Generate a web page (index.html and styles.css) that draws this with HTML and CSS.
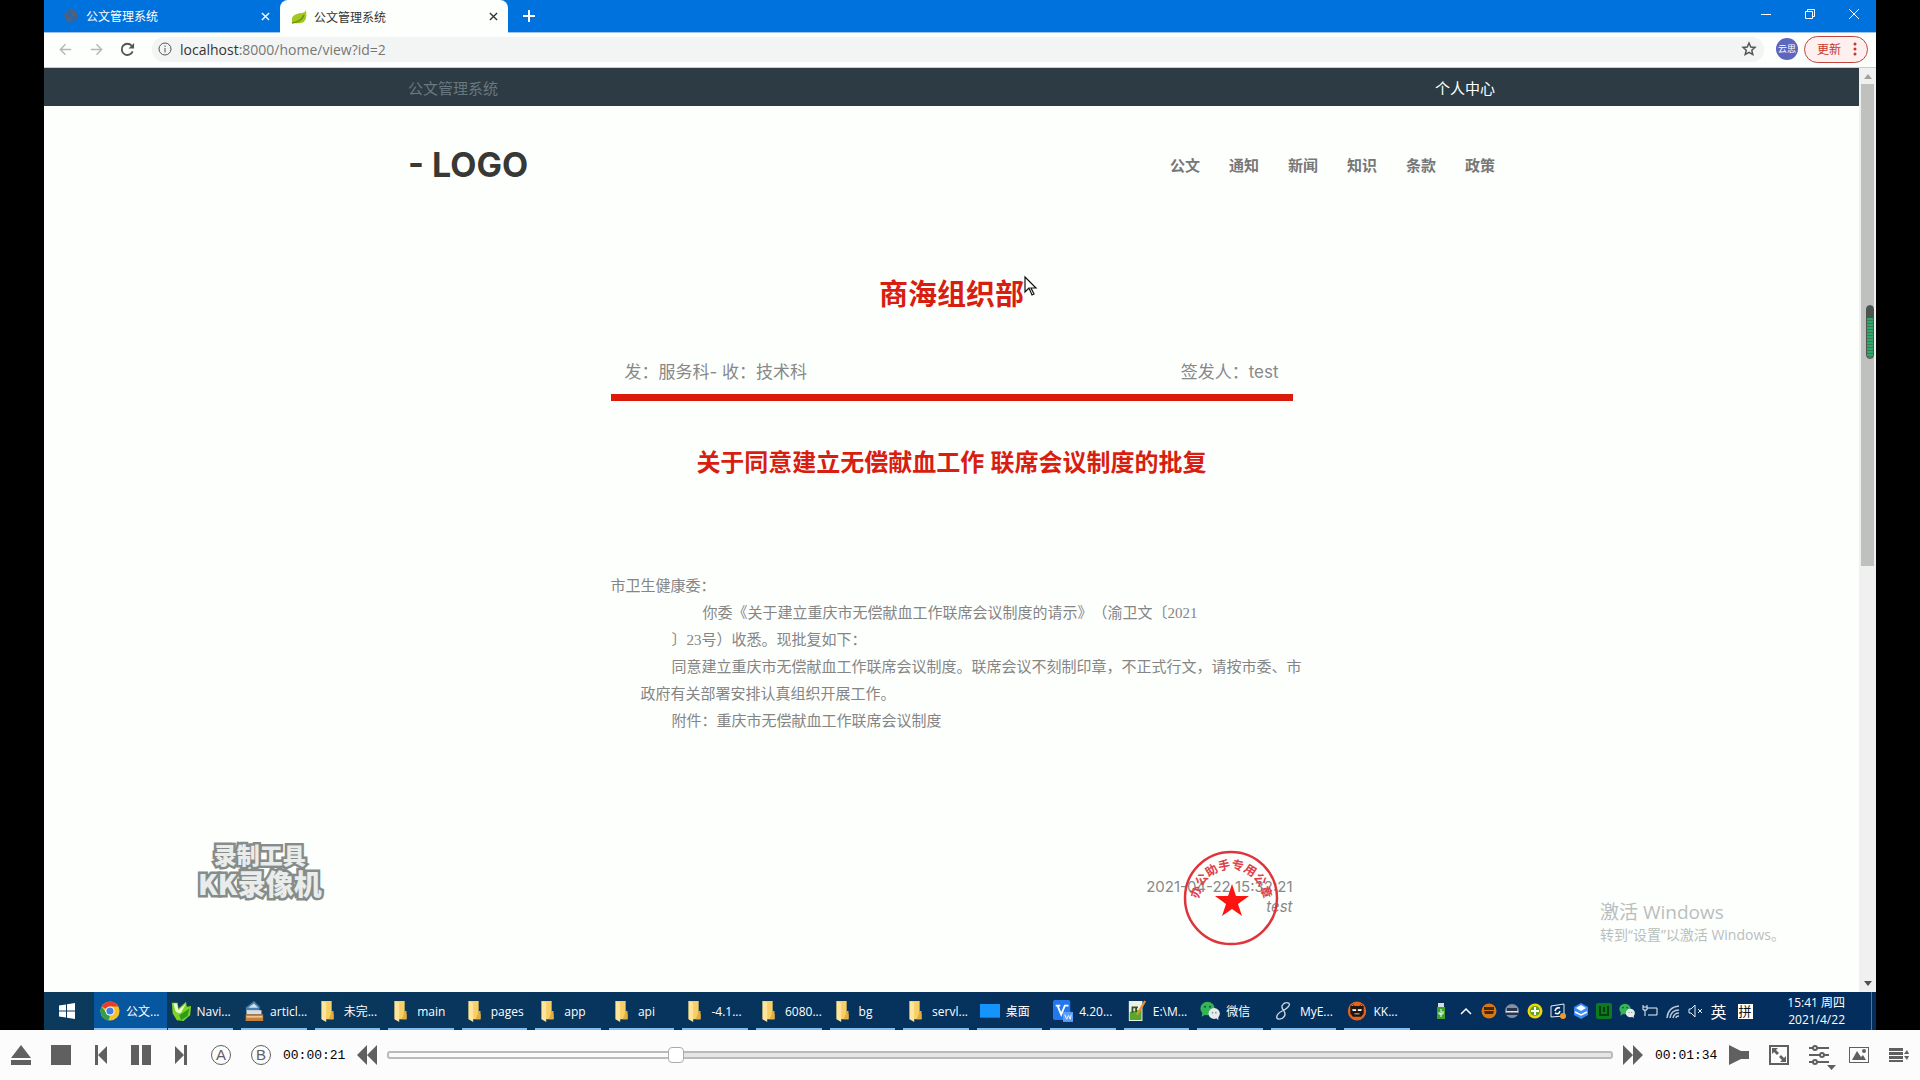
FILE: index.html
```html
<!DOCTYPE html>
<html lang="zh-CN">
<head>
<meta charset="utf-8">
<title>公文管理系统</title>
<link rel="stylesheet" href="styles.css">
</head>
<body>
<svg class="defs" aria-hidden="true">
  <symbol id="folder" viewBox="0 0 20 24"><path fill="#f7cf66" d="M3 1h11v14h2v6H3z"/><path fill="#ffe59c" d="M3 1l5 2v21l-5-3z"/><path fill="#e2ae3e" d="M14 12h2v9h-5z"/></symbol>
  <symbol id="bear" viewBox="0 0 24 24"><ellipse cx="12" cy="12" rx="11" ry="11.500" fill="#e5641c"/><path fill="#20150f" d="M4 6l3-2 2 2h6l2-2 3 2v9l-3 4H7l-3-4z"/><path fill="#fff" d="M5 6l1.500-1L8 6zM19 6l-1.500-1L16 6zM6 10h5v2H7zM13 10h5l-1 2h-4zM9 15h6v1H9z"/></symbol>
  <symbol id="wechat" viewBox="0 0 24 24"><ellipse cx="9" cy="9" rx="8.500" ry="8" fill="#35b558"/><path fill="#35b558" d="M3 13l-1 6 5-3z"/><circle cx="6" cy="7" r="1.200" fill="#12552a"/><circle cx="12" cy="7" r="1.200" fill="#12552a"/><ellipse cx="17" cy="15" rx="6.800" ry="6.500" fill="#e6ebec"/><path fill="#e6ebec" d="M18 19l4 4v-6z"/><circle cx="15" cy="14" r="1" fill="#8a9494"/><circle cx="19" cy="14" r="1" fill="#8a9494"/></symbol>
</svg>

<main class="screen">
  <header class="tabs">
    <div class="tab">
      <svg class="fav" viewBox="0 0 16 16"><circle cx="8" cy="8" r="6.500" fill="#52617a"/><path d="M4 3l5 1-1 4-3 1zM9 8l4 1-2 5-3-2z" fill="#2667b0"/></svg>
      <span>公文管理系统</span>
      <button aria-label="关闭标签页"><svg viewBox="0 0 10 10"><path d="M1 1l8 8M9 1l-8 8"/></svg></button>
    </div>
    <div class="tab active">
      <svg class="fav" viewBox="0 0 16 16"><path fill="#a5c61c" d="M1 13C0 5 6 5 10 4q4 0 5-3 2 12-5 13-6 1-9-1z"/><path d="M1 14q9-1 12-8" stroke="#5f9310" stroke-width="1.500" fill="none"/></svg>
      <span>公文管理系统</span>
      <button aria-label="关闭标签页"><svg viewBox="0 0 10 10"><path d="M1 1l8 8M9 1l-8 8"/></svg></button>
    </div>
    <button class="newtab" aria-label="新标签页"><svg viewBox="0 0 12 12"><path d="M6 0v12M0 6h12"/></svg></button>
    <div class="winctl">
      <button aria-label="最小化"><svg viewBox="0 0 12 12"><path d="M1 6.500h10"/></svg></button>
      <button aria-label="还原"><svg viewBox="0 0 12 12"><path d="M1.500 3.500h7v7h-7zM3.500 3v-1.500h7v7h-2"/></svg></button>
      <button aria-label="关闭"><svg viewBox="0 0 12 12"><path d="M1 1l10 10M11 1L1 11"/></svg></button>
    </div>
  </header>

  <div class="toolbar">
    <button class="nav dim" aria-label="后退"><svg viewBox="0 0 16 16"><path d="M14 8H3M8 2.500L2.500 8 8 13.500"/></svg></button>
    <button class="nav dim" aria-label="前进"><svg viewBox="0 0 16 16"><path d="M2 8h11M8 2.500L13.500 8 8 13.500"/></svg></button>
    <button class="nav" aria-label="重新加载"><svg viewBox="0 0 16 16"><path stroke-width="2" d="M13.500 10a6 6 0 1 1-1-6"/><path fill="#555" stroke="none" d="M15 1v6H9z"/></svg></button>
    <div class="omnibox">
      <svg class="info" viewBox="0 0 14 14"><circle cx="7" cy="7" r="6"/><path d="M7 6v4.500M7 3.500v1.500"/></svg>
      <span class="url"><span>localhost</span>:8000/home/view?id=2</span>
      <button class="star" aria-label="收藏"><svg viewBox="0 0 14 14"><path d="M7 1l1.800 4 4.200.400-3.200 2.900 1 4.200L7 10.300l-3.800 2.200 1-4.200L1 5.400 5.200 5z"/></svg></button>
    </div>
    <span class="avatar">云思</span>
    <button class="update">更新<svg viewBox="0 0 4 14"><circle cx="2" cy="2" r="1.500"/><circle cx="2" cy="7" r="1.500"/><circle cx="2" cy="12" r="1.500"/></svg></button>
  </div>

  <div class="viewport">
    <div class="page">
      <div class="topbar"><div class="wrap"><span class="site">公文管理系统</span><a href="#">个人中心</a></div></div>
      <div class="wrap brand">
        <a class="logo" href="#">- LOGO</a>
        <nav><a href="#">公文</a><a href="#">通知</a><a href="#">新闻</a><a href="#">知识</a><a href="#">条款</a><a href="#">政策</a></nav>
      </div>
      <article>
        <h1>商海组织部</h1>
        <div class="meta"><span>发：服务科- 收：技术科</span><span>签发人：test</span></div>
        <h2>关于同意建立无偿献血工作 联席会议制度的批复</h2>
        <div class="body">
          <p>市卫生健康委：</p>
          <p class="quote">你委《关于建立重庆市无偿献血工作联席会议制度的请示》（渝卫文〔2021<br>〕23号）收悉。现批复如下：</p>
          <p class="para">同意建立重庆市无偿献血工作联席会议制度。联席会议不刻制印章，不正式行文，请按市委、市<br>政府有关部署安排认真组织开展工作。</p>
          <p class="para">附件：重庆市无偿献血工作联席会议制度</p>
        </div>
        <footer class="sign">
          <time>2021-04-22 15:32:21</time>
          <em>test</em>
          <svg class="seal" viewBox="0 0 96 96"><circle cx="48" cy="48" r="46" fill="none" stroke="#e0343c" stroke-width="2.500"/><path id="arc" d="M16 51a32 32 0 0 1 64 0" fill="none"/><text><textPath href="#arc" startOffset="50%" text-anchor="middle">办公助手专用公章</textPath></text><path fill="#fb1410" d="M49 34l4 12h13l-11 8 4 12-10-7-10 7 4-12-11-8h13z"/></svg>
        </footer>
      </article>
      <div class="recorder"><span>录制工具</span><strong>KK录像机</strong></div>
      <div class="activate"><span>激活 Windows</span><small>转到“设置”以激活 Windows。</small></div>
      <svg class="cursor" viewBox="0 0 14 20"><path d="M1 1v15l4-4 3 7 2-1-3-6h5z" fill="#fff" stroke="#111" stroke-width="1.200"/></svg>
    </div>
    <div class="scroll">
      <svg viewBox="0 0 8 5"><path fill="#a0a0a0" d="M0 5l4-5 4 5z"/></svg>
      <div class="track"><div class="thumb"></div><div class="meter"></div></div>
      <svg viewBox="0 0 8 5"><path fill="#505050" d="M0 0l4 5 4-5z"/></svg>
    </div>
  </div>

  <footer class="taskbar">
    <button class="start" aria-label="开始"><svg viewBox="0 0 16 16"><path fill="#fff" d="M0 2.500l7-1v6H0zM8 1.300L16 0v7.500H8zM0 8.500h7v6l-7-1zM8 8.500h8V16l-8-1.300z"/></svg></button>
    <div class="apps">
      <button class="on"><svg viewBox="0 0 24 24"><circle cx="12" cy="12" r="11.500" fill="#f6c12b"/><path fill="#e0402e" d="M12 12L2 6.500A11.500 11.500 0 0 1 22 6.500H12z"/><path fill="#2f9e4f" d="M2 6.500L8 15l4 3-2 5.300A11.500 11.500 0 0 1 2 6.500z"/><circle cx="12" cy="12" r="5.500" fill="#fff"/><circle cx="12" cy="12" r="4.300" fill="#3f7fe8"/></svg>公文...</button>
      <button><svg viewBox="0 0 24 24"><path fill="#7ed321" d="M1 2h7l1 7 9-8 1 6 5-1-1 11-8 7-8-1-5-8z"/><path fill="#e7ffd0" d="M3 3h4l2 8 9-8-6 11q-5 2-7-3z"/><path fill="#2d9b1b" d="M10 17l12-8-2 9-8 5z"/></svg>Navi...</button>
      <button><svg viewBox="0 0 24 24"><path fill="#4d7fa8" d="M2 8l10-8 7 7-1 6H3z"/><path fill="#cfe2ee" d="M5 8l7-5 5 5z"/><path fill="#d9dde0" d="M3 11h18v5H3z"/><path fill="#c5813c" d="M2 16h21v8H2z"/><path fill="#f0c488" d="M3 18h19v2H3z"/></svg>articl...</button>
      <button><svg><use href="#folder"/></svg>未完...</button>
      <button><svg><use href="#folder"/></svg>main</button>
      <button><svg><use href="#folder"/></svg>pages</button>
      <button><svg><use href="#folder"/></svg>app</button>
      <button><svg><use href="#folder"/></svg>api</button>
      <button><svg><use href="#folder"/></svg>-4.1...</button>
      <button><svg><use href="#folder"/></svg>6080...</button>
      <button><svg><use href="#folder"/></svg>bg</button>
      <button><svg><use href="#folder"/></svg>servl...</button>
      <button><svg viewBox="0 0 20 20"><path fill="#1594fb" d="M0 3h20v14H0z"/><path fill="#0a72cf" d="M0 16h20v1H0z"/></svg>桌面</button>
      <button><svg viewBox="0 0 22 24"><rect width="19" height="22" rx="2" fill="#2478ee"/><path d="M3 6h5M5 6l4 10 4-10h4" fill="none" stroke="#fff" stroke-width="2"/><path fill="#5d9dfb" d="M11 13h11v11H11z"/><path d="M13 16l2 5 2-4 2 4 1-5" stroke="#fff" fill="none"/></svg>4.20...</button>
      <button><svg viewBox="0 0 22 24"><path fill="#eef0e6" d="M2 1h15v22H2z"/><path fill="#59a82e" d="M3 13l13-3v12H3z"/><path d="M6 7v7M6 8h6M10 8v5" stroke="#36531d" stroke-width="2"/><path d="M20 1l-9 15" stroke="#e6912c" stroke-width="2.500"/></svg>E:\M...</button>
      <button><svg><use href="#wechat"/></svg>微信</button>
      <button><svg viewBox="0 0 20 24"><path d="M16 4q-5-3-8 2-1 3 2 6 3 5-2 8-5 2-6-1 0-4 6-7 8-4 8-8" fill="none" stroke="#c9d6e2" stroke-width="1.500"/></svg>MyE...</button>
      <button><svg><use href="#bear"/></svg>KK...</button>
    </div>
    <div class="tray">
      <svg viewBox="0 0 16 16"><path fill="#d8dcd8" d="M5 0h6v4H5z"/><path fill="#3da32c" d="M4 4h8v12H4z"/><path d="M8 6v8M6 9v2h4V8" stroke="#fff" fill="none"/></svg>
      <svg viewBox="0 0 16 16"><path d="M3 11l5-5 5 5" stroke="#fff" stroke-width="1.500" fill="none"/></svg>
      <svg viewBox="0 0 16 16"><circle cx="8" cy="8" r="7.500" fill="#d97716"/><path fill="#3f2b14" d="M3 4h10v3H3zM3 8h10l-1 3H4z"/></svg>
      <svg viewBox="0 0 16 16"><circle cx="8" cy="8" r="7" fill="#8390a3"/><path fill="#27344d" d="M3 5h10v3H3zM1 10h14v2H1z"/><path fill="#e4e8ec" d="M2 8h12v1H2z"/></svg>
      <svg viewBox="0 0 16 16"><circle cx="8" cy="8" r="7.500" fill="#f2d40d"/><circle cx="8" cy="8" r="5" fill="#5da51e"/><path d="M8 4v8M4 8h8" stroke="#fff" stroke-width="2"/></svg>
      <svg viewBox="0 0 16 16"><path d="M1 3l13-2v12l-13 1z" stroke="#e6edf2" fill="none"/><path d="M5 8q1-4 5-3M10 8q-1 4-5 2" stroke="#fff" stroke-width="1.500" fill="none"/><circle cx="13" cy="13" r="3" fill="#f09a2b"/></svg>
      <svg viewBox="0 0 16 16"><path fill="#3a8df5" d="M8 0l7 4v8l-7 4-7-4V4z"/><path fill="#fff" d="M8 2l5 3-5 3-5-3z"/><path d="M2 9l6 3 6-3" stroke="#fff" stroke-width="1.500" fill="none"/></svg>
      <svg viewBox="0 0 16 16"><rect width="16" height="16" rx="2" fill="#0c7a20"/><path d="M4 3v9h8V3M8 4v5" stroke="#043d10" stroke-width="2" fill="none"/></svg>
      <svg><use href="#wechat"/></svg>
      <svg viewBox="0 0 16 16"><path d="M5 5h10v7H6M1 4h4v3H1zM3 7v6M1 2v2M5 2v2" stroke="#eef3f7" fill="none"/></svg>
      <svg viewBox="0 0 16 16"><path d="M2 15Q3 4 14 3M5 15q1-8 9-8M8 15q1-5 6-5M11 15q0-2 3-2" stroke="#b9c8d5" stroke-width="1.500" fill="none"/></svg>
      <svg viewBox="0 0 16 16"><path d="M1 6h2l4-4v12l-4-4H1zM10 6l4 4M14 6l-4 4" stroke="#e6edf2" fill="none"/></svg>
      <span class="lang">英</span>
      <span class="ime">拼</span>
    </div>
    <div class="clock">15:41 周四<br>2021/4/22</div>
  </footer>
</main>

<footer class="player">
  <button aria-label="打开"><svg viewBox="0 0 20 20"><path d="M10 0l10 13H0zM0 15h20v5H0z"/></svg></button>
  <button aria-label="停止"><svg viewBox="0 0 20 20"><path d="M0 0h20v20H0z"/></svg></button>
  <button aria-label="上一个"><svg viewBox="0 0 20 20"><path d="M4 0h3v20H4zM16 1v18L7 10z"/></svg></button>
  <button aria-label="暂停"><svg viewBox="0 0 20 20"><path d="M0 0h8v20H0zM11 0h9v20h-9z"/></svg></button>
  <button aria-label="下一个"><svg viewBox="0 0 20 20"><path d="M13 0h3v20h-3zM4 1v18l9-9z"/></svg></button>
  <button class="ab">A</button>
  <button class="ab">B</button>
  <time>00:00:21</time>
  <button class="seek" aria-label="快退"><svg viewBox="0 0 20 20"><path d="M10 0v20L0 10zM20 0v20L10 10z"/></svg></button>
  <input type="range" min="0" max="1000" value="231" aria-label="播放进度">
  <button class="seek" aria-label="快进"><svg viewBox="0 0 20 20"><path d="M0 0v20l10-10zM10 0v20l10-10z"/></svg></button>
  <time>00:01:34</time>
  <button aria-label="音量"><svg viewBox="0 0 20 20"><path d="M0 0l12 6h8v8h-8L0 20z"/></svg></button>
  <button aria-label="全屏"><svg viewBox="0 0 20 20"><path fill-rule="evenodd" d="M0 0h20v20H0zM2 2v16h16V2z"/><path d="M3 3h6L7 5l3 3-2 2-3-3-2 2zM17 17h-6l2-2-3-3 2-2 3 3 2-2z"/></svg></button>
  <button aria-label="设置"><svg viewBox="0 0 20 20"><path d="M0 2h20v2H0zM0 9h20v2H0zM0 16h20v2H0zM18 20h9l-4.500 5z"/><g fill="#fcfcfc" stroke="#606060" stroke-width="2"><circle cx="6" cy="3" r="2"/><circle cx="13" cy="10" r="2"/><circle cx="6" cy="17" r="2"/></g></svg></button>
  <button aria-label="截图"><svg viewBox="0 0 20 20"><path fill-rule="evenodd" d="M0 2h20v16H0zM1 3v14h18V3z"/><path d="M3 15l5-9 4 6 2-2 3 5z"/><circle cx="15" cy="6" r="2"/></svg></button>
  <button aria-label="播放列表"><svg viewBox="0 0 20 20"><path d="M0 3h14v3H0zM0 7h14v3H0zM0 11h14v3H0zM0 15h14v2H0zM15 9l3-4 2 4zM15 11h5l-2 4z"/></svg></button>
</footer>
</body>
</html>
```
FILE: styles.css
```css
* { box-sizing: border-box; }
body {
  margin: 0;
  min-height: 100vh;
  display: flex;
  flex-direction: column;
  background: #000;
  font-family: "Open Sans", "Noto Sans CJK SC", sans-serif;
  font-size: 12px;
}
button { border: 0; padding: 0; background: none; font: inherit; color: inherit; }
a { color: inherit; text-decoration: none; }
h1, h2, p { margin: 0; }
svg { display: block; overflow: visible; flex: none; }
.defs { position: absolute; width: 0; height: 0; }

.screen { flex: 1; margin: 0 44px; display: flex; flex-direction: column; background: #fdfffd; }

/* browser chrome */
.tabs { display: flex; height: 33px; background: #0072dd; color: #fff; border-bottom: 1px solid #9cc4ee; }
.tab { display: flex; align-items: center; width: 236px; padding: 0 6px 0 19px; }
.tab span { flex: 1; margin-left: 7px; }
.tab button { width: 18px; height: 18px; display: grid; place-items: center; }
.tab button svg { width: 9px; height: 9px; stroke: #fff; stroke-width: 1.500; }
.tab.active { width: 228px; padding: 0 6px 0 11px; height: 33px; border-radius: 8px 8px 0 0; background: #fdfffd; color: #333; }
.tab.active button svg { stroke: #333; }
.fav { width: 16px; height: 16px; }
.newtab { width: 42px; display: grid; place-items: center; }
.newtab svg { width: 12px; height: 12px; stroke: #fff; stroke-width: 2; }
.winctl { display: flex; margin: 0 0 4px auto; }
.winctl button { width: 44px; display: grid; place-items: center; }
.winctl svg { width: 12px; height: 12px; fill: none; stroke: #fff; }
.toolbar { display: flex; align-items: center; height: 35px; padding: 0 8px 2px 6px; border-bottom: 1px solid #c9cccb; }
.nav { width: 31px; display: grid; place-items: center; }
.nav svg { width: 15px; height: 15px; fill: none; stroke: #555; stroke-width: 1.500; }
.nav.dim svg { stroke: #b5b7b6; }
.omnibox { flex: 1; display: flex; align-items: center; height: 25px; margin: 0 12px 0 9px; padding: 0 8px 0 6px; border-radius: 12px; background: #f3f5f4; }
.info, .star svg { width: 14px; height: 14px; fill: none; stroke: #555; }
.star svg { stroke-width: 1.500; }
.url { flex: 1; margin-left: 8px; font-size: 14px; color: #777; }
.url span { color: #333; }
.avatar { width: 22px; height: 22px; border-radius: 50%; background: #5c67bd; color: #fff; font-size: 9px; line-height: 22px; text-align: center; }
.update { display: flex; align-items: center; justify-content: space-between; width: 64px; height: 27px; margin-left: 6px; padding: 0 10px 0 12px; border: 1px solid #c0443c; border-radius: 14px; background: #fdf0ee; color: #c5362c; font-size: 12px; }
.update svg { width: 4px; height: 14px; fill: #c5362c; }

/* web page */
.viewport { flex: 1; display: flex; min-height: 0; }
.page { flex: 1; position: relative; }
.wrap { display: flex; justify-content: space-between; align-items: center; max-width: 1087px; margin: 0 auto; }
.topbar { background: #2c3b44; font-size: 15px; line-height: 38px; color: #fff; }
.topbar .wrap { padding-top: 2px; line-height: 36px; }
.site { color: #697780; }
.brand { height: 116px; }
.logo { font: bold 34px "Inter", sans-serif; color: #383834; }
.brand nav { display: flex; gap: 29px; font-size: 15px; font-weight: bold; color: #777; }
article { width: 682px; margin: 50px auto 0; color: #888; }
h1 { font-size: 29px; line-height: 44px; text-align: center; color: #d81e10; }
.meta { display: flex; justify-content: space-between; margin-top: 38px; padding: 0 14px 4px; border-bottom: 7px solid #dc1a0c; font-family: "Inter", "Noto Sans CJK SC", sans-serif; font-size: 17px; line-height: 36px; }
h2 { margin-top: 43px; font-size: 24px; line-height: 36px; text-align: center; white-space: nowrap; color: #d81e10; }
.body { margin-top: 93px; font: 15px/27px "Liberation Serif", "Noto Sans CJK SC", serif; color: #858585; white-space: nowrap; text-spacing-trim: space-all; }
.quote { padding-left: 61px; text-indent: 31px; }
.para { padding-left: 30px; text-indent: 31px; }
.sign { position: relative; display: flex; flex-direction: column; align-items: flex-end; margin-top: 142px; font: 15px/20px "Inter", sans-serif; }
.seal { position: absolute; right: 14px; top: -27px; width: 96px; height: 96px; }
.seal text { font: bold 12px "Noto Sans CJK SC", sans-serif; fill: #e0404a; }

/* overlays on the recorded desktop */
.recorder { position: absolute; left: 154px; bottom: 94px; display: flex; flex-direction: column; align-items: center; font-family: "Noto Sans CJK SC", sans-serif; font-weight: 900; font-size: 23px; line-height: 29px; color: #e9ecea; -webkit-text-stroke: 5px #858c8a; paint-order: stroke fill; }
.recorder strong { font-weight: 900; font-size: 28px; }
.activate { position: absolute; left: 1556px; bottom: 47px; display: flex; flex-direction: column; font-size: 19px; line-height: 26px; color: #b9bebd; white-space: nowrap; }
.activate small { font-size: 14px; line-height: 20px; }
.cursor { position: absolute; left: 980px; top: 208px; width: 14px; height: 20px; }
.scroll { width: 17px; padding: 6px 0; display: flex; flex-direction: column; align-items: center; gap: 5px; background: #eff0ef; }
.scroll svg { width: 8px; height: 5px; }
.track { flex: 1; width: 13px; position: relative; }
.thumb { height: 54%; background: #bfc1be; }
.meter { position: absolute; right: 0; top: 221px; width: 8px; height: 54px; border-radius: 4px; border: 1px solid #4c5450; background: linear-gradient(#4c5450 12px, transparent 12px), repeating-linear-gradient(#2fa868 0 2px, #3c7a58 2px 3px); }

/* taskbar */
.taskbar { display: flex; height: 38px; background: linear-gradient(90deg, #0b3a5c, #06335c 40%, #032d5d); color: #fff; }
.start { flex: none; width: 50px; padding-right: 4px; display: grid; place-items: center; }
.start svg { width: 16px; height: 16px; }
.apps { flex: 1; display: grid; grid-template-columns: repeat(18, minmax(0, 1fr)); }
.apps button { display: flex; align-items: center; gap: 6px; margin-right: 8px; padding: 2px 0 0 3px; border-bottom: 2px solid #86bdf0; white-space: nowrap; }
.apps button.on { margin-right: 1px; padding-left: 6px; background: #0756a0; }
.apps svg { width: 20px; height: 22px; }
.tray { flex: none; display: grid; grid-template-columns: 27px repeat(12, 23px) 30px; align-items: center; justify-items: center; margin-left: 9px; }
.tray svg { width: 16px; height: 16px; }
.lang { font-size: 16px; }
.ime { width: 15px; height: 15px; background: #fff; color: #111; line-height: 15px; font-size: 13px; text-align: center; }
.clock { flex: none; width: 112px; margin-right: 4px; padding: 2px 26px 0 0; border-right: 1px solid #547595; line-height: 17px; text-align: right; white-space: nowrap; }

/* video player */
.player { display: flex; align-items: center; height: 50px; padding: 0 11px; gap: 20px; background: #fcfcfc; color: #606060; }
.player svg { width: 20px; height: 20px; fill: #606060; }
.player .ab { width: 20px; height: 20px; border: 1px solid #606060; border-radius: 50%; font: 15px/18px "Liberation Sans", sans-serif; }
.player time { width: 62px; margin: 0 -8px; font: 13px "Liberation Mono", monospace; color: #000; }
.player input { flex: 1; min-width: 0; margin: 0 -10px; height: 18px; appearance: none; background: none; }
.player input::-webkit-slider-runnable-track { height: 8px; border: 2px solid #b9bbb9; border-radius: 3px; background: linear-gradient(90deg, #fafafa 23%, #e4e6e4 23%); }
.player input::-webkit-slider-thumb { appearance: none; width: 16px; height: 16px; margin-top: -6px; border: 1px solid #a9aba9; border-radius: 4px; background: #fff; }
```
